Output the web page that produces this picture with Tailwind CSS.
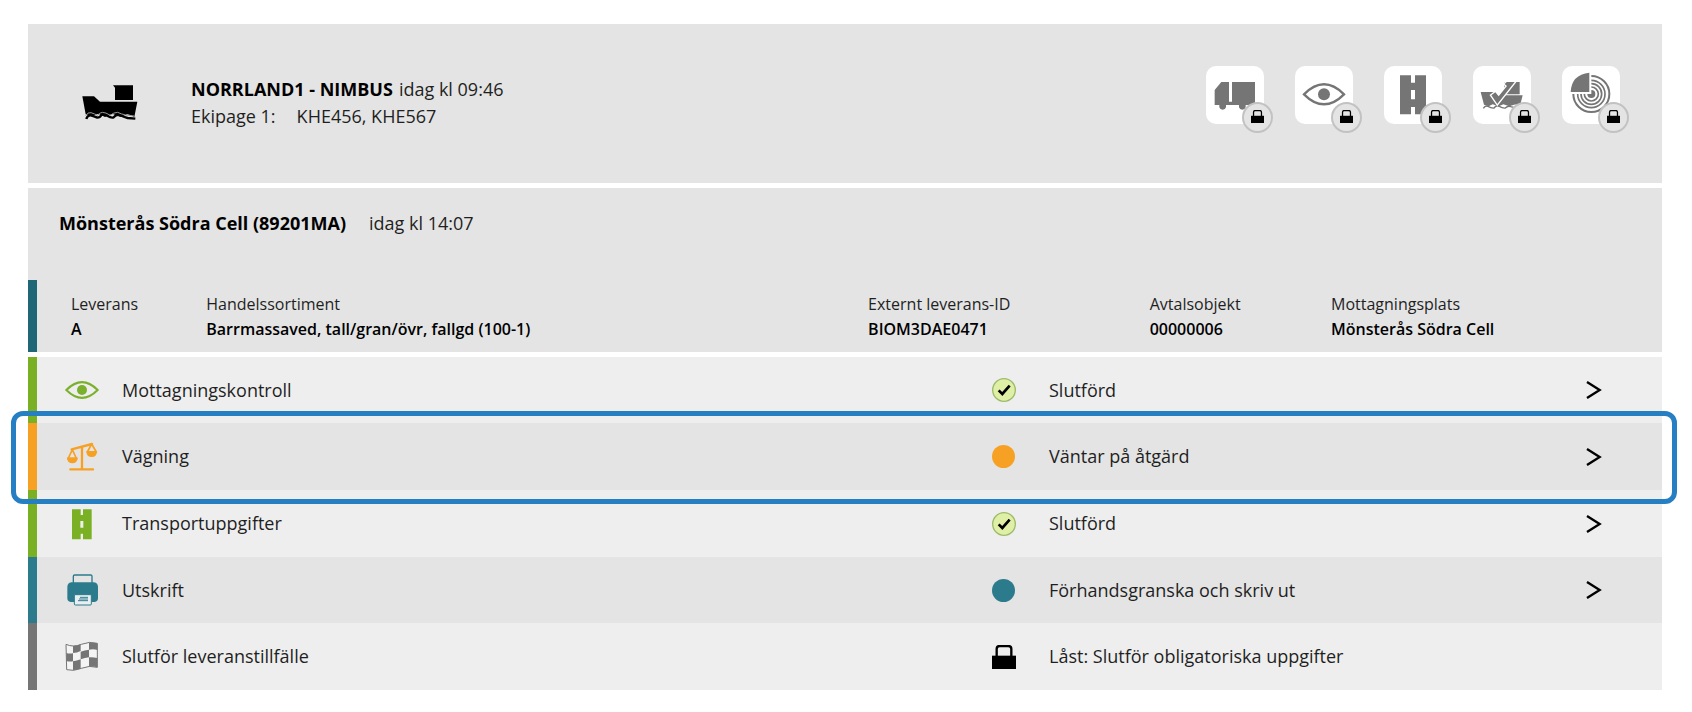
<!DOCTYPE html>
<html lang="sv">
<head>
<meta charset="utf-8">
<meta name="viewport" content="width=device-width, initial-scale=1">
<title>Leverans</title>
<script src="https://cdn.jsdelivr.net/npm/@tailwindcss/browser@4"></script>
</head>
<body class="bg-white font-['Open_Sans',sans-serif] text-[18px] leading-[27px] text-[#1f1f1f]">
<svg class="hidden" aria-hidden="true">
  <symbol id="lock" viewBox="0 0 72 72"><path d="M0 32h72v40H0z"/><path d="M14 34V12q0-9 9-9h26q9 0 9 9v22" fill="none" stroke="currentColor" stroke-width="7"/></symbol>
  <symbol id="chevron" viewBox="0 0 48 54"><path d="M3 3 41 27 3 51" fill="none" stroke="currentColor" stroke-width="7"/></symbol>
  <symbol id="done" viewBox="0 0 72 72"><circle cx="36" cy="36" r="34" fill="#dff0a6" stroke="#9dbb6a" stroke-width="4"/><path d="M20 37 31 48 53 23" fill="none" stroke="#000" stroke-width="8"/></symbol>
</svg>
<main class="ml-7 mr-[30px] pt-6">
  <header class="flex h-[159px] items-start justify-between bg-[#e4e4e4] pr-[42px] pl-[54px]">
    <div class="flex">
      <svg class="mt-[61px] h-[35px] w-14" viewBox="65 44 168 105" aria-hidden="true">
        <path d="M158 45h60v44h-54V52zM66 78h35l18 16h112l-9 46q-12-8-22-8-10 5-20 8l-24-10-22 10-20-10q-12 3-18 8l-20-6z"/>
        <path d="M78 146q3-12 13-11 10 2 20 7 8 0 12-8 8-4 18 2 12 8 19 5 8-10 18-7 12 6 24 9l23 2" fill="none" stroke="#000" stroke-width="7"/>
        <path d="M76 136q6-11 16-9 12 4 20 8 8-9 14-9 10 0 24 9 10-9 22-9 10 5 24 8l26 3" fill="none" stroke="#999" stroke-width="3"/>
      </svg>
      <div class="mt-[52px] ml-[53px]">
        <p><strong class="mr-[6px] text-black">NORRLAND1 - NIMBUS</strong>idag kl 09:46</p>
        <p><span class="mr-[21px]">Ekipage 1:</span>KHE456, KHE567</p>
      </div>
    </div>
    <div class="mt-[42px] flex gap-[31px] text-[#757575]">
      <button type="button" aria-label="Transport, låst" class="relative size-[58px] rounded-[10px] bg-white">
        <svg class="size-[58px]" viewBox="49 50 174 174" fill="currentColor"><path d="M75 122 95 98h23v59h9V98h69v69h-28v7q-2 7-10 7t-10-7v-7h-39v7q-2 7-10 7t-10-7v-7H75z"/></svg>
        <span class="absolute -right-[9px] -bottom-[9px] flex size-[31px] items-center justify-center rounded-full border-2 border-[#c2c2c2] bg-[#e4e4e4] pb-[2px] text-black"><svg class="size-[13px]" fill="currentColor"><use href="#lock"/></svg></span>
      </button>
      <button type="button" aria-label="Mottagningskontroll, låst" class="relative size-[58px] rounded-[10px] bg-white">
        <svg class="size-[58px]" viewBox="317 50 174 174" fill="currentColor"><path d="M344 135q60-60 120 0-60 60-120 0z" fill="none" stroke="currentColor" stroke-width="7"/><circle cx="404" cy="135" r="18"/></svg>
        <span class="absolute -right-[9px] -bottom-[9px] flex size-[31px] items-center justify-center rounded-full border-2 border-[#c2c2c2] bg-[#e4e4e4] pb-[2px] text-black"><svg class="size-[13px]" fill="currentColor"><use href="#lock"/></svg></span>
      </button>
      <button type="button" aria-label="Transportuppgifter, låst" class="relative size-[58px] rounded-[10px] bg-white">
        <svg class="size-[58px]" viewBox="583 50 174 174" fill="currentColor"><path fill-rule="evenodd" d="M631 78h33v22h12V78h33v117h-33v-22h-12v22h-33zM664 122v28h12v-28z"/></svg>
        <span class="absolute -right-[9px] -bottom-[9px] flex size-[31px] items-center justify-center rounded-full border-2 border-[#c2c2c2] bg-[#e4e4e4] pb-[2px] text-black"><svg class="size-[13px]" fill="currentColor"><use href="#lock"/></svg></span>
      </button>
      <button type="button" aria-label="Fartyg, låst" class="relative size-[58px] rounded-[10px] bg-white">
        <svg class="size-[58px]" viewBox="9 20 174 174" fill="currentColor"><path d="M103 68h46v37h-46zM32 98h38l10 10h78l-8 31q-10-5-18-3l-14 5-18-6-14 6-18-6-12 6-14-5z"/><path d="M40 147q6-10 14-6 10 6 18 5 8-10 16-5 10 6 18 5 8-8 16-4 10 4 28 5" fill="none" stroke="currentColor" stroke-width="4"/><path d="M64 108 76 99 86 111 111 80 104 74 110 68H134L82 134z" stroke="#fff" stroke-width="8" paint-order="stroke"/></svg>
        <span class="absolute -right-[9px] -bottom-[9px] flex size-[31px] items-center justify-center rounded-full border-2 border-[#c2c2c2] bg-[#e4e4e4] pb-[2px] text-black"><svg class="size-[13px]" fill="currentColor"><use href="#lock"/></svg></span>
      </button>
      <button type="button" aria-label="Stockmätning, låst" class="relative size-[58px] rounded-[10px] bg-white">
        <svg class="size-[58px]" viewBox="457 50 174 174" fill="none" stroke="currentColor"><circle cx="545" cy="134" r="54" stroke-width="6"/><circle cx="545" cy="134" r="41" stroke-width="5"/><circle cx="545" cy="134" r="31" stroke-width="5"/><circle cx="545" cy="134" r="21" stroke-width="5"/><circle cx="545" cy="134" r="12" fill="currentColor" stroke="none"/><path d="M480 62h65v72h-65z" fill="#fff" stroke="none"/><path d="M483 128q2-52 56-58v58z" fill="currentColor" stroke="none"/></svg>
        <span class="absolute -right-[9px] -bottom-[9px] flex size-[31px] items-center justify-center rounded-full border-2 border-[#c2c2c2] bg-[#e4e4e4] pb-[2px] text-black"><svg class="size-[13px]" fill="currentColor"><use href="#lock"/></svg></span>
      </button>
    </div>
  </header>

  <section class="mt-[5px] bg-[#e4e4e4]">
    <h1 class="flex h-[92px] gap-[23px] pt-[22px] pl-[31px]"><strong class="text-black">Mönsterås Södra Cell (89201MA)</strong><span>idag kl 14:07</span></h1>
    <div class="h-[72px] border-l-[9px] border-[#1f6777] pt-[12px] pl-[34px]">
      <table class="w-full table-fixed text-left text-[16px] leading-[25px]">
        <colgroup><col class="w-[8.5%]"><col class="w-[41.6%]"><col class="w-[17.7%]"><col class="w-[11.4%]"><col></colgroup>
        <thead><tr><th class="font-normal">Leverans</th><th class="font-normal">Handelssortiment</th><th class="font-normal">Externt leverans-ID</th><th class="font-normal">Avtalsobjekt</th><th class="font-normal">Mottagningsplats</th></tr></thead>
        <tbody class="font-semibold text-black"><tr><td>A</td><td>Barrmassaved, tall/gran/övr, fallgd (100-1)</td><td>BIOM3DAE0471</td><td>00000006</td><td>Mönsterås Södra Cell</td></tr></tbody>
      </table>
    </div>
  </section>

  <ul class="mt-[5px]">
    <li class="grid h-[66px] grid-cols-[85px_870fr_57px_537fr_76px] items-center border-l-[9px] border-[#7ab023] bg-[#eeeeee]">
      <svg class="ml-[25px] size-10 text-[#7ab02c]" viewBox="186 331 120 120" fill="currentColor"><path d="M199 391q47-47 94 0-47 47-94 0z" fill="none" stroke="currentColor" stroke-width="6"/><circle cx="246" cy="391" r="15"/></svg>
      <span>Mottagningskontroll</span>
      <svg class="size-6"><use href="#done"/></svg>
      <span>Slutförd</span>
      <a href="#mottagningskontroll" aria-label="Öppna Mottagningskontroll" class="text-black"><svg class="h-[18px] w-4"><use href="#chevron"/></svg></a>
    </li>
    <li class="relative grid h-[67px] grid-cols-[85px_870fr_57px_537fr_76px] items-center border-l-[9px] border-[#f7a124] bg-[#e4e4e4]">
      <svg class="ml-[25px] size-10 text-[#f7a124]" viewBox="186 531 120 120" fill="none" stroke="currentColor" stroke-width="7" stroke-linejoin="round" stroke-linecap="round"><path d="M211 628h68M246 628V562M215 568 276 552"/><path d="M217 569 204 597M217 569 230 597M275 552 262 576M275 552 289 576" stroke-width="5"/><path d="M203 594h28q-1 14-14 14t-14-14zM261 575h28q-1 14-14 14t-14-14z" fill="currentColor" stroke-width="4"/></svg>
      <span>Vägning</span>
      <span class="size-[23px] rounded-full bg-[#f7a124]"></span>
      <span>Väntar på åtgärd</span>
      <a href="#vagning" aria-label="Öppna Vägning" class="text-black"><svg class="h-[18px] w-4"><use href="#chevron"/></svg></a>
      <div class="pointer-events-none absolute -top-3 -right-[15px] -bottom-[14px] -left-[26px] z-10 rounded-[12px] border-[5px] border-[#277fc3]"></div>
    </li>
    <li class="grid h-[67px] grid-cols-[85px_870fr_57px_537fr_76px] items-center border-l-[9px] border-[#7ab023] bg-[#eeeeee]">
      <svg class="ml-[25px] size-10 text-[#7ab023]" viewBox="186 71 120 120" fill="currentColor"><path fill-rule="evenodd" d="M216 87h26v17h7V87h26v90h-26v-17h-7v17h-26zM241 122v20h9v-20z"/></svg>
      <span>Transportuppgifter</span>
      <svg class="size-6"><use href="#done"/></svg>
      <span>Slutförd</span>
      <a href="#transportuppgifter" aria-label="Öppna Transportuppgifter" class="text-black"><svg class="h-[18px] w-4"><use href="#chevron"/></svg></a>
    </li>
    <li class="grid h-[66px] grid-cols-[85px_870fr_57px_537fr_76px] items-center border-l-[9px] border-[#2c7b8d] bg-[#e4e4e4]">
      <svg class="ml-[25px] size-10 text-[#2c7b8d]" viewBox="186 271 120 120" fill="none" stroke="currentColor"><path d="M220 314v-24q0-4 4-4h48q4 0 4 4v24" stroke-width="4"/><path d="M214 308h68q12 2 12 14v34q0 10-10 11H212q-10-1-10-11v-34q0-12 12-14z" fill="currentColor" stroke="none"/><path d="M223 345h51v28q0 3-3 3h-45q-3 0-3-3z" fill="#e9eef0" stroke-width="3"/><path d="M240 353h24M237 358h27M234 363h30" stroke-width="3"/></svg>
      <span>Utskrift</span>
      <span class="size-[23px] rounded-full bg-[#2c7b8d]"></span>
      <span>Förhandsgranska och skriv ut</span>
      <a href="#utskrift" aria-label="Öppna Utskrift" class="text-black"><svg class="h-[18px] w-4"><use href="#chevron"/></svg></a>
    </li>
    <li class="grid h-[67px] grid-cols-[85px_870fr_57px_537fr_76px] items-center border-l-[9px] border-[#757575] bg-[#eeeeee]">
      <svg class="ml-[25px] size-10 text-[#757575]" viewBox="186 470 120 120" fill="currentColor"><path d="M198 492q22 10 46 0t48-3v72q-24-7-48 3t-44 4z" fill="#f4f4f4" stroke="currentColor" stroke-width="3"/><path d="M219 497q11 0 23-5v20q-11 6-23 6zM267 487q13-2 25 2v20q-12-4-25-1zM199 518q9 3 20 1v24q-10 2-20-1zM242 514q12-5 25-6v23q-12 1-25 6zM219 543q11-1 23-6v28q-11 4-23 4zM267 531q12-1 25 2v28q-12-4-25-2z"/></svg>
      <span>Slutför leveranstillfälle</span>
      <svg class="size-6 text-black" fill="currentColor"><use href="#lock"/></svg>
      <span>Låst: Slutför obligatoriska uppgifter</span>
    </li>
  </ul>
</main>
</body>
</html>
